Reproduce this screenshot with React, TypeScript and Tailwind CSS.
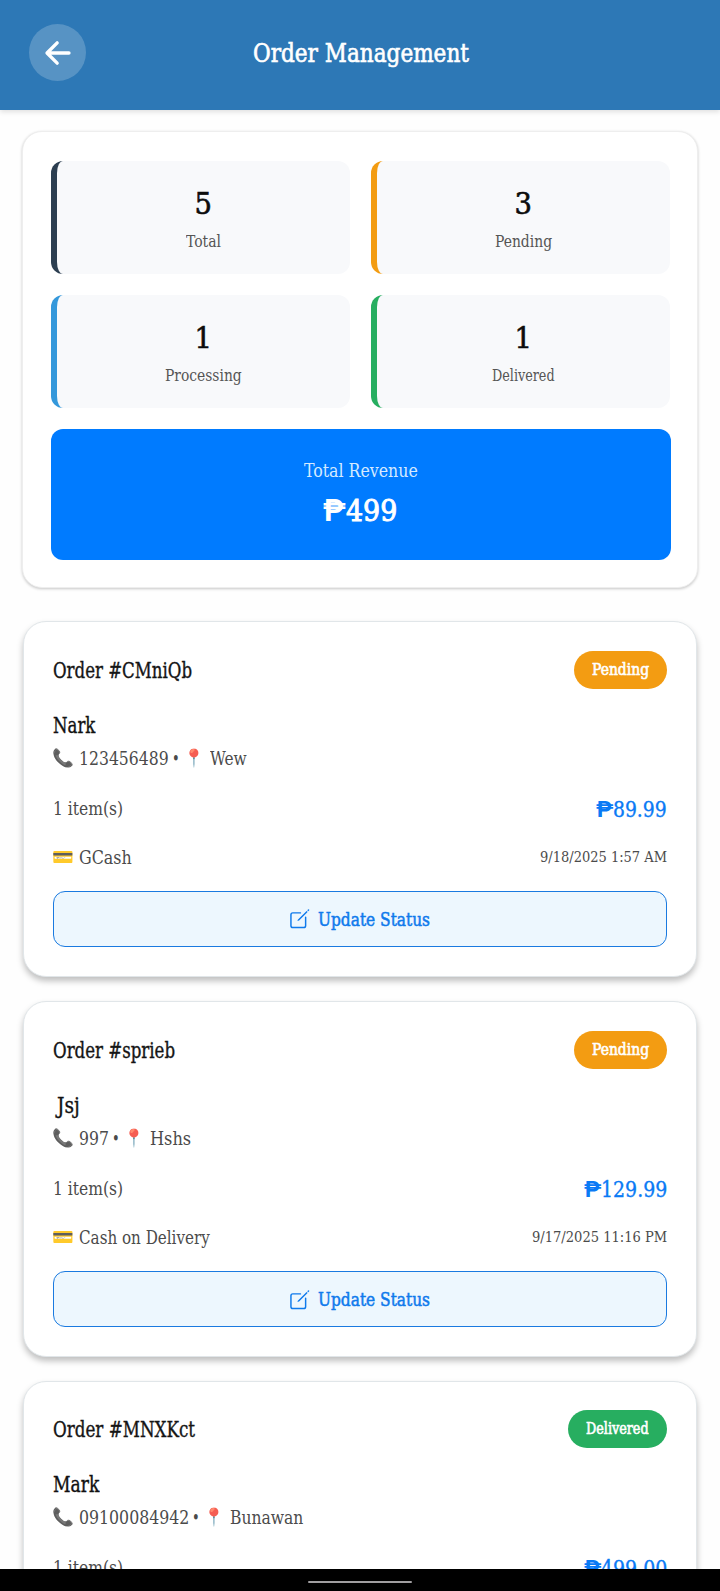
import { useLayoutEffect, useRef } from "react";
import { IoArrowBack, IoCreateOutline } from "react-icons/io5";

type FitProps = { text: string; width: number; className?: string };

/** Single-line label whose glyphs are condensed to an exact width. */
function Fit({ text, width, className = "" }: FitProps) {
  const ref = useRef<HTMLSpanElement>(null);
  useLayoutEffect(() => {
    const el = ref.current;
    if (el) el.style.transform = `scaleX(${width / el.offsetWidth})`;
  }, [text, width]);
  return (
    <span className={`block shrink-0 whitespace-nowrap ${className}`} style={{ width }}>
      <span ref={ref} className="inline-block origin-left">
        {text}
      </span>
    </span>
  );
}

const peso = "font-['Roboto'] font-bold";
const semibold = "[-webkit-text-stroke:0.35px_currentColor]";

const stats = [
  { value: "5", label: "Total", w: 35, border: "border-l-[#2c3e50]" },
  { value: "3", label: "Pending", w: 57, border: "border-l-[#f39c12]" },
  { value: "1", label: "Processing", w: 77, border: "border-l-[#3498db]" },
  { value: "1", label: "Delivered", w: 63, border: "border-l-[#27ae60]" },
];

type Order = {
  id: string; idW: number;
  status: string; statusW: number; badge: string;
  name: string; nameW: number; nameShift?: string;
  pad: string;
  phone: string; phoneW: number;
  place: string; placeW: number;
  price: string; priceW: number;
  pay: string; payW: number;
  date: string; dateW: number;
};

const orders: Order[] = [
  {
    id: "Order #CMniQb", idW: 139, status: "Pending", statusW: 57, badge: "bg-[#f39c12]", pad: "pt-[29px]",
    name: "Nark", nameW: 42, phone: "123456489", phoneW: 90, place: "Wew", placeW: 37,
    price: "89.99", priceW: 54, pay: "GCash", payW: 53, date: "9/18/2025 1:57 AM", dateW: 127,
  },
  {
    id: "Order #sprieb", idW: 122, status: "Pending", statusW: 57, badge: "bg-[#f39c12]", pad: "pt-[29.5px]",
    name: "Jsj", nameW: 23, nameShift: "ml-[4px]", phone: "997", phoneW: 30, place: "Hshs", placeW: 41,
    price: "129.99", priceW: 66, pay: "Cash on Delivery", payW: 131, date: "9/17/2025 11:16 PM", dateW: 135,
  },
  {
    id: "Order #MNXKct", idW: 142, status: "Delivered", statusW: 63, badge: "bg-[#27ae60]", pad: "pt-[28.5px]",
    name: "Mark", nameW: 46, phone: "09100084942", phoneW: 110, place: "Bunawan", placeW: 73,
    price: "499.00", priceW: 66, pay: "GCash", payW: 53, date: "9/17/2025 10:42 PM", dateW: 135,
  },
];

function Emoji({ char }: { char: string }) {
  return (
    <span className="flex w-[21px] shrink-0 justify-center font-['Noto_Color_Emoji'] text-[17.5px] leading-[29px] opacity-85">
      {char}
    </span>
  );
}

function OrderCard({ o }: { o: Order }) {
  return (
    <article className={`h-[355.75px] shrink-0 rounded-[23px] border border-[#e1e6e9] bg-white pl-[29px] pr-[29.5px] shadow-[0_4px_6px_rgba(0,0,0,0.25)] ${o.pad}`}>
      <div className="flex h-[38px] items-center justify-between">
        <Fit text={o.id} width={o.idW} className={`pt-[2px] text-[21.5px] leading-[38px] text-[#151515] ${semibold}`} />
        <div className={`flex h-[38px] items-center rounded-full px-[18px] ${o.badge}`}>
          <Fit text={o.status} width={o.statusW} className="text-[16px] leading-[38px] text-white [-webkit-text-stroke:0.6px_currentColor]" />
        </div>
      </div>
      <div className="mt-[22px] flex h-[30px]">
        <Fit text={o.name} width={o.nameW} className={`text-[21.5px] leading-[30px] text-[#111] ${semibold} ${o.nameShift ?? ""}`} />
      </div>
      <div className="mt-[3px] flex h-[30px] text-[18px] leading-[29px] text-[#4b4b4b]">
        <Emoji char="📞" />
        <Fit text={o.phone} width={o.phoneW} className="ml-[5px]" />
        <Fit text="•" width={8} className="ml-[3px]" />
        <span className="ml-[4px] flex">
          <Emoji char="📍" />
        </span>
        <Fit text={o.place} width={o.placeW} className="ml-[5px]" />
      </div>
      <div className="mt-[20px] flex h-[30px] justify-between leading-[30px]">
        <Fit text="1 item(s)" width={70} className="text-[18px] leading-[29px] text-[#4b4b4b]" />
        <div className="flex text-[22px] leading-[31px] text-[#0a7af5]">
          <Fit text="₱" width={17} className={peso} />
          <Fit text={o.price} width={o.priceW} className={semibold} />
        </div>
      </div>
      <div className="mt-[19px] flex h-[30px] justify-between text-[#4b4b4b]">
        <div className="flex text-[18px] leading-[29px]">
          <Emoji char="💳" />
          <Fit text={o.pay} width={o.payW} className="ml-[5px]" />
        </div>
        <Fit text={o.date} width={o.dateW} className="text-[15.5px] leading-[29px]" />
      </div>
      <button className="mt-[18px] flex h-[56px] w-full items-center justify-center rounded-[12px] border border-[#1a7ae0] bg-[#edf7fe] pr-[2px] text-[#0f7aec]">
        <IoCreateOutline className="size-[23.5px] shrink-0" />
        <Fit text="Update Status" width={112} className="ml-[7px] pt-[2px] text-left text-[18.5px] leading-[30px] [-webkit-text-stroke:0.5px_currentColor]" />
      </button>
    </article>
  );
}

export default function App() {
  return (
    <div className="flex h-[1591px] w-[720px] flex-col overflow-hidden bg-[#fefefe] font-['DejaVu_Serif_Condensed','DejaVu_Serif',serif]">
      <header className="z-10 flex h-[110px] shrink-0 items-center bg-[#2d78b6] pb-[5px] pl-[29px] shadow-[0_2px_5px_rgba(0,0,0,0.12)]">
        <button className="flex size-[57px] items-center justify-center rounded-full bg-white/20 text-white">
          <IoArrowBack className="size-[36px]" />
        </button>
        <Fit text="Order Management" width={216} className="ml-[167px] pt-[1px] text-[26px] leading-[40px] text-white [-webkit-text-stroke:0.6px_currentColor]" />
      </header>

      <main className="flex min-h-0 flex-1 flex-col overflow-hidden">
        <section className="mx-[22px] mt-[21px] h-[457px] shrink-0 rounded-[20px] border border-[#eeeeee] bg-white pl-[28px] pr-[26px] pt-[29px] shadow-[0_1px_3px_rgba(0,0,0,0.22)]">
          <div className="grid grid-cols-[299px_299px] gap-x-[21px] gap-y-[21px]">
            {stats.map((s) => (
              <div
                key={s.label}
                className={`flex h-[113px] flex-col items-center rounded-[12px] border-l-[6px] bg-[#f8f9fb] pr-[1px] pt-[25px] ${s.border}`}
              >
                <Fit text={s.value} width={17} className="text-[30.5px] leading-[36px] text-[#0c0c0c] [-webkit-text-stroke:0.6px_currentColor]" />
                <Fit text={s.label} width={s.w} className="mt-[7px] text-[16px] leading-[25px] text-[#555]" />
              </div>
            ))}
          </div>
          <div className="mt-[21px] flex h-[131px] w-[620px] flex-col items-center rounded-[12px] bg-[#007bff] pt-[30px]">
            <Fit text="Total Revenue" width={114} className="text-[18.5px] leading-[24px] text-[#d5eaff]" />
            <div className="mt-[9px] flex pr-[2px] text-[30.5px] leading-[37px] text-white">
              <Fit text="₱" width={23} className={peso} />
              <Fit text="499" width={51} className="[-webkit-text-stroke:0.9px_currentColor]" />
            </div>
          </div>
        </section>

        <div className="mx-[23px] mt-[33px] flex flex-col gap-[24px]">
          {orders.map((o) => (
            <OrderCard key={o.id} o={o} />
          ))}
        </div>
      </main>

      <footer className="z-10 flex h-[22px] shrink-0 justify-center bg-black pt-[12px]">
        <div className="h-[2px] w-[104px] rounded-full bg-[#a09ea0]" />
      </footer>
    </div>
  );
}
